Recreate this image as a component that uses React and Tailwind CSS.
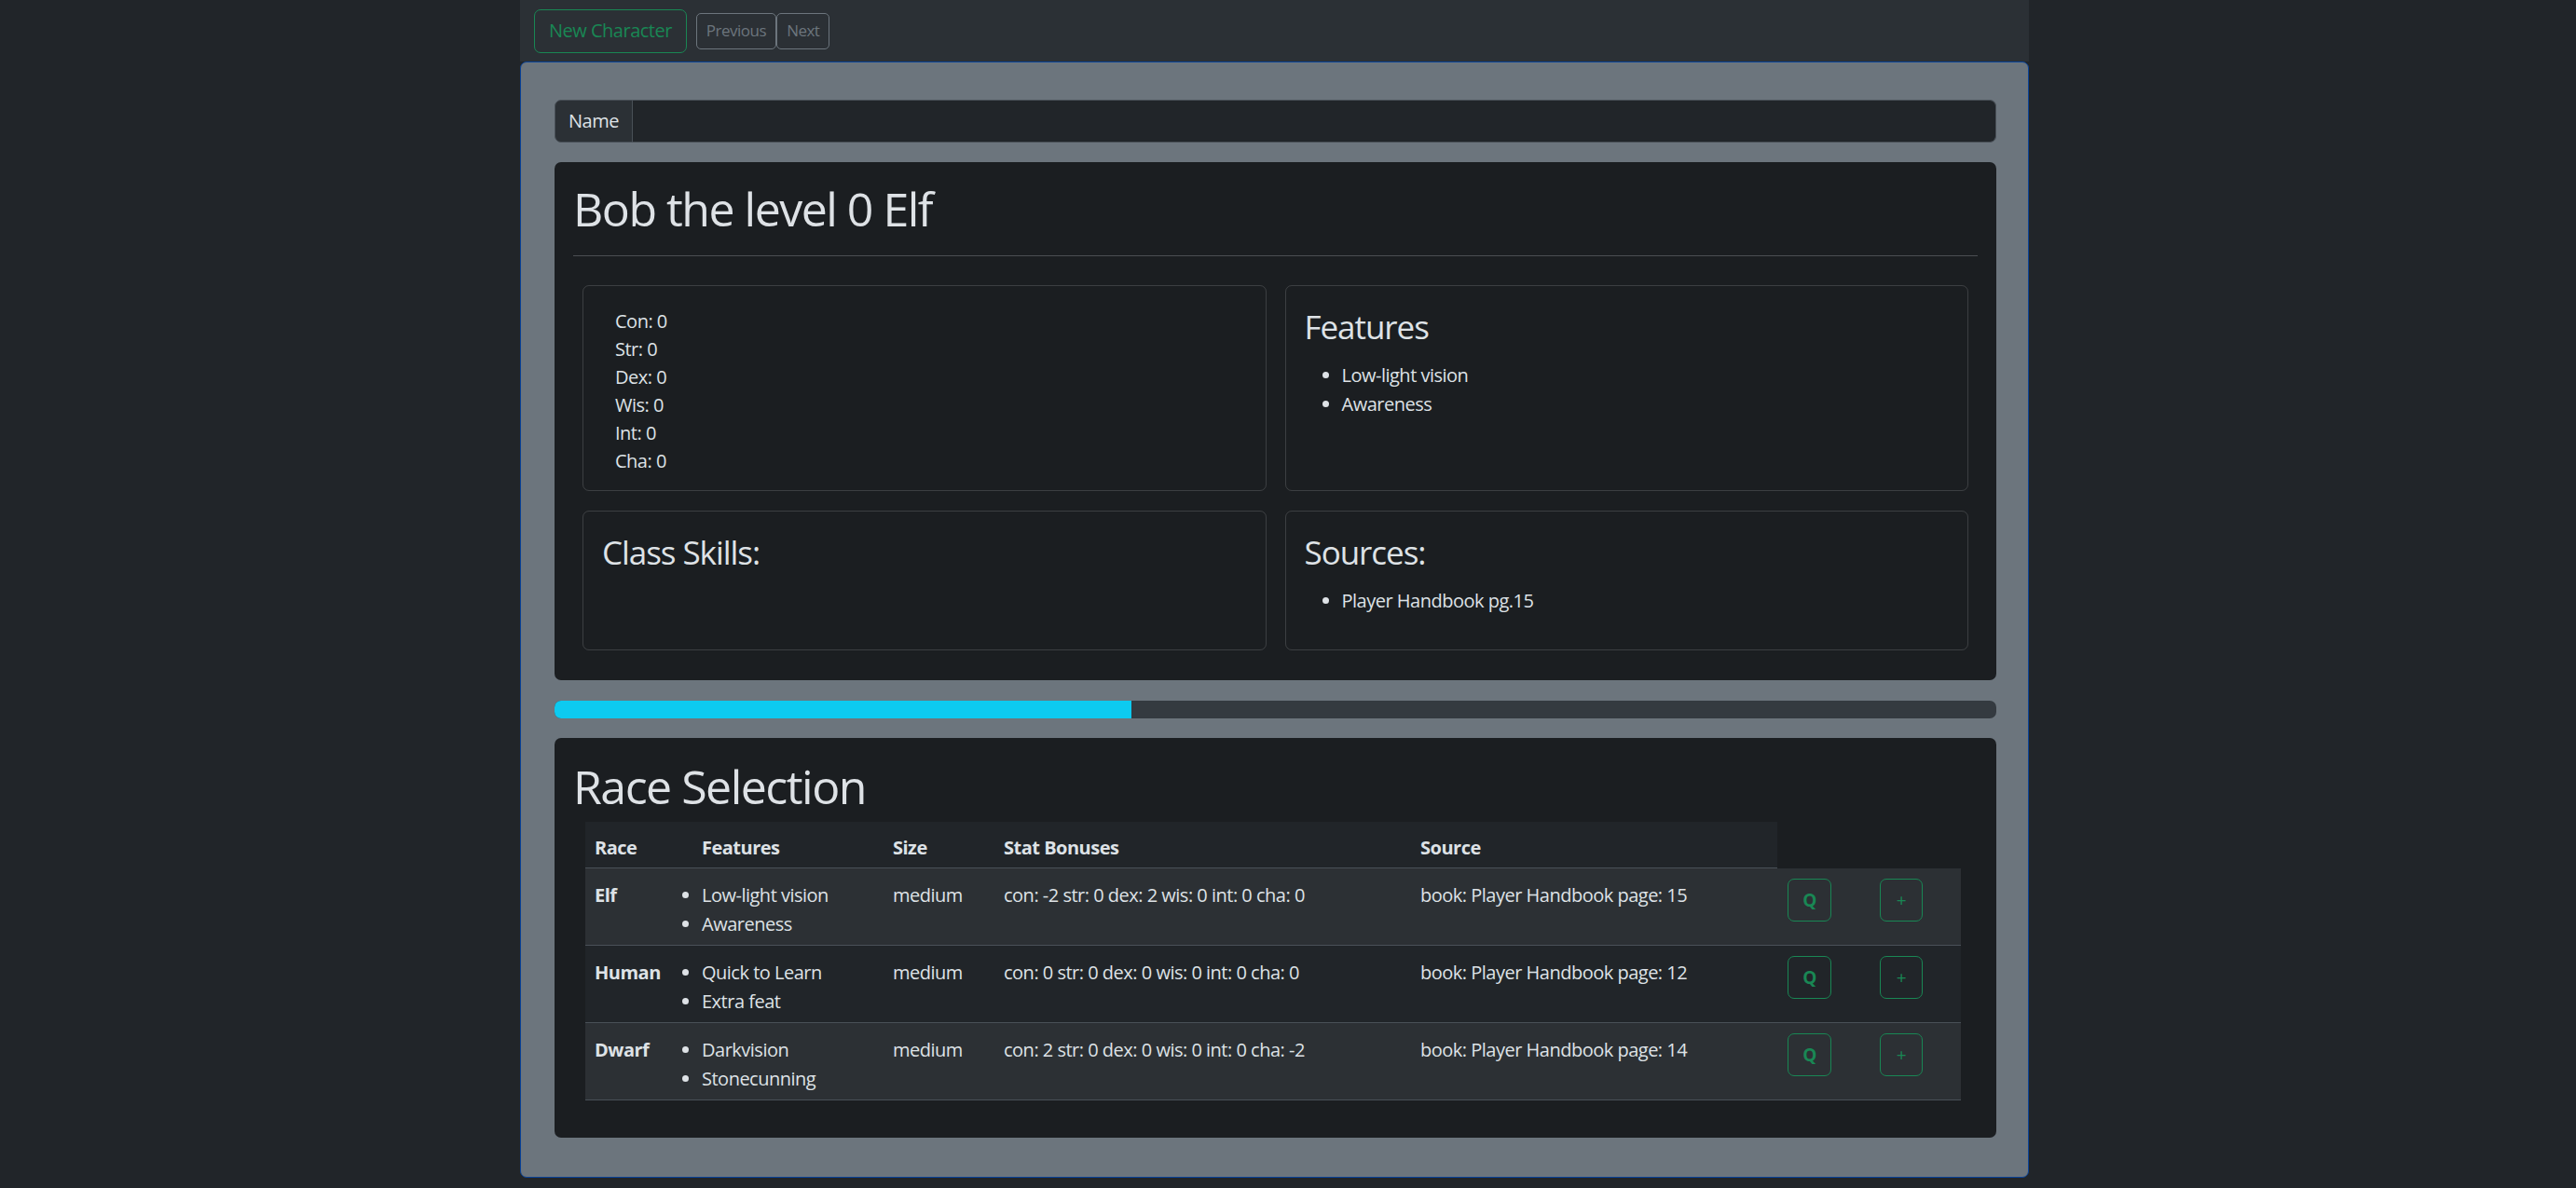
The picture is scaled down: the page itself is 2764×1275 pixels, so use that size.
import React from "react";

const races = [
  {
    name: "Elf",
    features: ["Low-light vision", "Awareness"],
    size: "medium",
    stats: "con: -2 str: 0 dex: 2 wis: 0 int: 0 cha: 0",
    source: "book: Player Handbook page: 15",
  },
  {
    name: "Human",
    features: ["Quick to Learn", "Extra feat"],
    size: "medium",
    stats: "con: 0 str: 0 dex: 0 wis: 0 int: 0 cha: 0",
    source: "book: Player Handbook page: 12",
  },
  {
    name: "Dwarf",
    features: ["Darkvision", "Stonecunning"],
    size: "medium",
    stats: "con: 2 str: 0 dex: 0 wis: 0 int: 0 cha: -2",
    source: "book: Player Handbook page: 14",
  },
];

const stats = ["Con", "Str", "Dex", "Wis", "Int", "Cha"];

export default function App() {
  return (
    <div className="min-h-screen bg-[#212529] text-[#dee2e6] font-['Open_Sans','Noto_Sans',sans-serif] tracking-[-0.025em] text-[20px] leading-[30px]">
      <div className="ml-[558px] w-[1619px] pb-[13px]">
        {/* Top bar */}
        <div className="h-[66px] bg-[#2b3035] flex items-center pl-[15px]">
          <button className="h-[47px] px-[15px] border border-[#198754] text-[#198754] rounded-[7px] text-[20px]">
            New Character
          </button>
          <div className="flex ml-[10px]">
            <button className="h-[39px] px-[10px] border border-[#6c757d] text-[#6c757d] rounded-[5px] text-[17px]">
              Previous
            </button>
            <button className="h-[39px] px-[10px] border border-[#6c757d] text-[#6c757d] rounded-[5px] text-[17px]">
              Next
            </button>
          </div>
        </div>

        {/* Main panel */}
        <div className="bg-[#6c757d] border border-[#084298] rounded-[7px] pl-[36px] pr-[34px] pt-[40px] pb-[42px]">
          {/* Name input */}
          <div className="flex h-[46px]">
            <span className="w-[84px] flex items-center pl-[14px] bg-[#2b3035] border border-[#495057] rounded-l-[7px]">
              Name
            </span>
            <input className="flex-1 bg-[#212529] border border-l-0 border-[#495057] rounded-r-[7px] outline-none px-3" />
          </div>

          {/* Character card */}
          <div className="mt-[21px] bg-[#1b1e21] rounded-[7px] px-[20px] pt-[20px] pb-[32px]">
            <h1 className="text-[50px] leading-[60px] tracking-[-0.03em]">Bob the level 0 Elf</h1>
            <hr className="mt-[20px] mb-[31px] border-t border-[#4b4e52]" />
            <div className="grid grid-cols-2 grid-rows-[221px_150px] gap-x-[20px] gap-y-[21px] px-[10px]">
              <div className="border border-white/15 rounded-[7px] pl-[34px] pt-[23px]">
                {stats.map((s) => (
                  <div key={s}>{s}: 0</div>
                ))}
              </div>
              <div className="border border-white/15 rounded-[7px] px-[20px] pt-[23px]">
                <h3 className="text-[35px] leading-[42px] mb-[15px] tracking-[-0.03em]">Features</h3>
                <ul className="list-disc pl-[40px] leading-[31px]">
                  <li>Low-light vision</li>
                  <li>Awareness</li>
                </ul>
              </div>
              <div className="border border-white/15 rounded-[7px] px-[20px] pt-[23px]">
                <h3 className="text-[35px] leading-[42px] tracking-[-0.03em]">Class Skills:</h3>
              </div>
              <div className="border border-white/15 rounded-[7px] px-[20px] pt-[23px]">
                <h3 className="text-[35px] leading-[42px] mb-[15px] tracking-[-0.03em]">Sources:</h3>
                <ul className="list-disc pl-[40px] leading-[31px]">
                  <li>Player Handbook pg.15</li>
                </ul>
              </div>
            </div>
          </div>

          {/* Progress */}
          <div className="mt-[22px] h-[19px] bg-[#343a40] rounded-[7px] overflow-hidden">
            <div className="h-full bg-[#0dcaf0]" style={{ width: "40%" }} />
          </div>

          {/* Race selection */}
          <div className="mt-[21px] bg-[#1b1e21] rounded-[7px] px-[20px] pt-[22px] pb-[40px]">
            <h1 className="text-[50px] leading-[60px] mb-[8px] tracking-[-0.03em]">Race Selection</h1>
            <table className="ml-[13px] w-[1476px] table-fixed border-collapse text-left">
              <colgroup>
                <col className="w-[115px]" />
                <col className="w-[205px]" />
                <col className="w-[119px]" />
                <col className="w-[447px]" />
                <col className="w-[393px]" />
                <col className="w-[99px]" />
                <col className="w-[98px]" />
              </colgroup>
              <thead>
                <tr>
                  {["Race", "Features", "Size", "Stat Bonuses", "Source"].map((h) => (
                    <th
                      key={h}
                      className="bg-[#212529] font-bold pt-[13px] pb-[6px] px-[10px] border-b border-[#495057]"
                    >
                      {h}
                    </th>
                  ))}
                </tr>
              </thead>
              <tbody>
                {races.map((r, i) => (
                  <tr
                    key={r.name}
                    className={`${i % 2 === 0 ? "bg-[#2c3034]" : "bg-[#212529]"} border-b border-[#495057] align-top`}
                  >
                    <td className="pt-[13px] pb-[7px] px-[10px] font-bold leading-[31px]">{r.name}</td>
                    <td className="pt-[13px] pb-[7px] px-[10px] leading-[31px]">
                      <ul className="list-disc pl-0">
                        {r.features.map((f) => (
                          <li key={f}>{f}</li>
                        ))}
                      </ul>
                    </td>
                    <td className="pt-[13px] px-[10px] leading-[31px]">{r.size}</td>
                    <td className="pt-[13px] px-[10px] leading-[31px]">{r.stats}</td>
                    <td className="pt-[13px] px-[10px] leading-[31px]">{r.source}</td>
                    <td className="pt-[11px] px-[11px]">
                      <button className="w-[47px] h-[46px] border border-[#198754] text-[#198754] rounded-[7px] font-bold text-[19px]">
                        Q
                      </button>
                    </td>
                    <td className="pt-[11px] px-[11px]">
                      <button className="w-[46px] h-[46px] border border-[#198754] text-[#198754] rounded-[7px] text-[19px]">
                        +
                      </button>
                    </td>
                  </tr>
                ))}
              </tbody>
            </table>
          </div>
        </div>
      </div>
    </div>
  );
}
